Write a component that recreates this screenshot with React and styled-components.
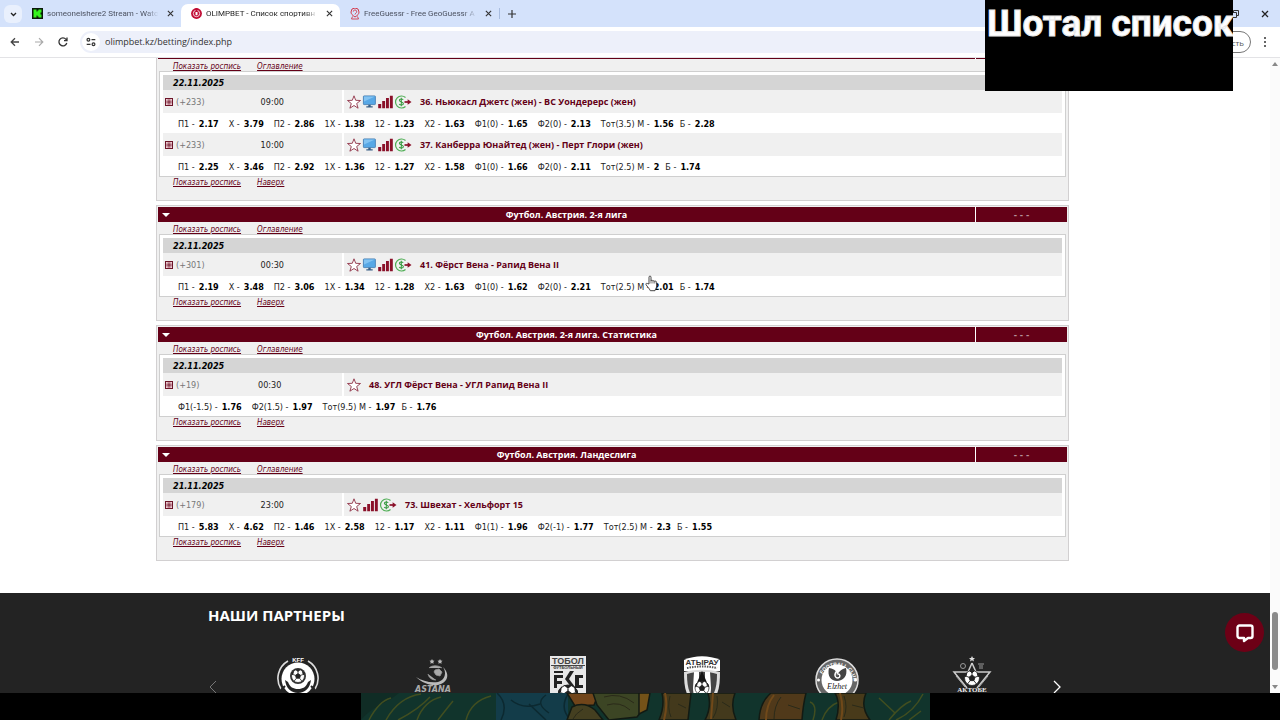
import React from "react";
import styled, { createGlobalStyle } from "styled-components";

const maroon = "#640017";
const siteFont = `"DejaVu Sans Condensed", "DejaVu Sans", sans-serif`;
const titleFont = `"Open Sans", "Noto Sans", sans-serif`;
const chromeFont = `"Open Sans", "Noto Sans", sans-serif`;

const GlobalStyle = createGlobalStyle`
  * { box-sizing: border-box; }
  body { margin: 0; background: #fff; font-family: ${siteFont}; font-size: 9px; color: #222; }
  button { border: 0; padding: 0; margin: 0; background: none; font: inherit; color: inherit; display: flex; align-items: center; justify-content: center; }
  svg { display: block; flex: none; }
  h1, h2, ul { margin: 0; padding: 0; font-size: inherit; }
  ul { list-style: none; }
`;

const Screen = styled.div`
  position: relative;
  display: flex;
  flex-direction: column;
  height: 100vh;
  overflow: hidden;
`;

/* Browser window */
const TabStrip = styled.div`
  display: flex;
  align-items: flex-end;
  height: 27px;
  padding-left: 4px;
  background: #d4e2fb;
  font-family: ${chromeFont};
  flex: none;
`;
const TabSearch = styled.button`
  && {
    width: 18px;
    height: 18px;
    margin: 0 0 4px;
    border-radius: 6px;
    background: #e9f0fd;
  }
`;
const Tab = styled.div`
  display: flex;
  align-items: center;
  gap: 4px;
  width: 159px;
  height: 23px;
  padding: 0 4px 4px 10px;
  border-radius: 7px 7px 0 0;
  background: ${(p) => (p.$active ? "#fff" : "transparent")};
  color: ${(p) => (p.$active ? "#1f1f1f" : "#4b5160")};
`;
const TabTitle = styled.span`
  flex: 1;
  overflow: hidden;
  white-space: nowrap;
  font: 8px/14px Roboto, sans-serif;
  mask-image: linear-gradient(90deg, #000 88%, transparent);
`;
const TabClose = styled.button`
  && { width: 14px; height: 14px; color: #333; }
`;
const TabDivider = styled.span`
  width: 1px;
  height: 11px;
  margin: 0 8px 8px 0;
  background: #a9bde0;
`;
const NewTab = styled.button`
  && { height: 19px; margin-bottom: 4px; color: #333; }
`;
const WindowButtons = styled.div`
  display: flex;
  gap: 22px;
  margin: 0 11px 9px auto;
`;
const Toolbar = styled.div`
  display: flex;
  align-items: center;
  height: 31px;
  padding: 0 10px 0 9px;
  border-bottom: 1px solid #e3e3e6;
  background: #fff;
  font-family: ${chromeFont};
  flex: none;
`;
const NavButtons = styled.div`
  display: flex;
  gap: 12px;
  width: 71px;
`;
const Omnibox = styled.div`
  display: flex;
  align-items: center;
  gap: 5px;
  flex: 1;
  height: 22px;
  padding-left: 2px;
  border-radius: 11px;
  background: #edf0fa;
`;
const SiteInfo = styled.button`
  && { width: 18px; height: 18px; border-radius: 9px; background: #fff; color: #333; }
`;
const Address = styled.input`
  flex: 1;
  border: 0;
  padding: 0;
  background: none;
  color: #333;
  font: 9px/14px ${chromeFont};
  outline: none;
`;
const ProfilePill = styled.button`
  && {
    justify-content: flex-end;
    width: 80px;
    height: 22px;
    margin: 0 9px;
    padding-right: 6px;
    border: 1px solid #777;
    border-radius: 11px;
    color: #555;
    font-size: 8px;
  }
`;

/* Page */
const Viewport = styled.div`
  display: flex;
  flex: 1;
  min-height: 0;
`;
const PageBody = styled.div`
  display: flex;
  flex-direction: column;
  flex: 1;
  overflow: hidden;
`;
const ScrollTrack = styled.div`
  display: flex;
  flex-direction: column;
  align-items: center;
  width: 10px;
  padding: 4px 0;
  background: #fbfbfb;
`;
const ScrollThumb = styled.div`
  width: 6px;
  height: 58px;
  margin: auto 0 15px;
  border-radius: 3px;
  background: #8b8b8b;
`;
const Leagues = styled.main`
  display: flex;
  flex-direction: column;
  gap: 4px;
  margin: -16px 201px 32px 156px;
  flex: none;
`;
const League = styled.section`
  padding: 1px 1px 11px;
  border: 1px solid #d2d0d1;
  background: #f0f0f0;
`;
const LeagueHeader = styled.header`
  display: flex;
  height: 15px;
  background: ${maroon};
  color: #fff;
`;
const Collapse = styled.button`
  && { width: 16px; height: 15px; }
`;
const LeagueTitle = styled.h2`
  flex: 1;
  padding-right: 16px;
  text-align: center;
  font-family: ${titleFont};
  line-height: 15px;
`;
const LeagueExtra = styled.span`
  width: 92px;
  border-left: 1px solid #fff;
  line-height: 16px;
  text-align: center;
  font-weight: bold;
  color: #b8909a;
`;
const Links = styled.nav`
  display: flex;
  gap: 16px;
  height: 12px;
  padding: ${(p) => (p.$top ? "2px" : "0")} 0 0 15px;
  font-size: 8px;
  line-height: 12px;
`;
const Link = styled.a`
  color: ${maroon};
  font-style: italic;
  text-decoration: underline;
`;
const MatchTable = styled.table`
  width: calc(100% - 2px);
  margin: 0 1px;
  padding: 3px 3px 0;
  border: 1px solid #cfcfcf;
  border-spacing: 0;
  background: #fff;
  td { padding: 0; }
`;
const DateCell = styled.th`
  height: 15px;
  padding: 2px 0 0 10px;
  background: #d5d5d5;
  color: #000;
  text-align: left;
  font-style: italic;
  line-height: 13px;
`;
const TimeCell = styled.td`
  width: 181px;
  height: 23px;
  border-right: 2px solid #fff;
  background: #f0f0f0;
`;
const TimeLine = styled.div`
  display: flex;
  align-items: center;
  padding: 0 2px;
`;
const Count = styled.span`
  margin-left: 3px;
  color: #777;
`;
const Time = styled.time`
  flex: 1;
  text-align: center;
`;
const NameCell = styled.td`
  background: #f0f0f0;
`;
const NameLine = styled.div`
  display: flex;
  align-items: center;
  padding-left: 3px;
`;
const MatchName = styled.a`
  margin-left: 7px;
  color: ${maroon};
  font-family: ${titleFont};
  font-weight: bold;
  text-decoration: none;
  white-space: nowrap;
`;
const OddsCell = styled.td`
  height: 20px;
`;
const OddsList = styled.ul`
  display: flex;
  gap: 10px;
  padding: 1px 0 0 15px;
  line-height: 14px;
  white-space: nowrap;
`;
const Odd = styled.li`
  display: flex;
  gap: 4px;
  margin-left: ${(p) => (p.$tight ? "-4px" : "0")};
  b { color: #000; }
`;

/* Partners */
const Footer = styled.footer`
  flex: 1;
  padding: 12px 208px 0 208px;
  background: #232323;
  color: #fff;
`;
const PartnersTitle = styled.h2`
  && { font: bold 15px/20px ${titleFont}; }
`;
const Carousel = styled.div`
  display: flex;
  margin-top: 31px;
`;
const Arrow = styled.button`
  && {
    width: 23px;
    height: 62px;
    justify-content: ${(p) => (p.$next ? "flex-end" : "flex-start")};
    color: ${(p) => (p.$next ? "#fff" : "#777")};
  }
`;
const Partners = styled.ul`
  display: flex;
  flex: 1;
  li { flex: 1; display: flex; justify-content: center; }
`;

/* Stream overlay */
const ChatButton = styled.button`
  && {
    position: absolute;
    right: 16px;
    bottom: 68px;
    width: 39px;
    height: 39px;
    border-radius: 50%;
    background: #6d0016;
    color: #fff;
  }
`;
const Banner = styled.div`
  position: absolute;
  top: 0;
  right: 47px;
  width: 248px;
  height: 91px;
  padding: 3px 0 0 2px;
  overflow: hidden;
  background: #000;
  color: #fff;
  font: bold 37px/42px Roboto, "Liberation Sans", sans-serif;
  -webkit-text-stroke: 1px #e8e8e8;
  white-space: nowrap;
`;
const Pointer = styled.div`
  position: absolute;
  left: 645px;
  top: 275px;
`;
const BottomStrip = styled.div`
  flex: none;
  height: 27px;
  padding: 0 350px 0 361px;
  background: #000;
  svg { width: 100%; }
`;

const Cross = ({ size = 7 }) => (
  <svg width={size} height={size} viewBox="0 0 8 8" stroke="currentColor" strokeWidth="1.3"><path d="M1 1l6 6M7 1L1 7" /></svg>
);
const Kick = () => (
  <svg width="11" height="11" viewBox="0 0 11 11"><rect width="11" height="11" fill="#0b1a08" /><path d="M1.5 1.500h3v2h1v-1h1v-1h3v3h-1v2h1v3h-3v-1h-1v-1h-1v2h-3z" fill="#35f51c" /></svg>
);
const OlimpIcon = () => (
  <svg width="11" height="11" viewBox="0 0 11 11"><circle cx="5.500" cy="5.500" r="5.400" fill="#c00c34" /><circle cx="5.500" cy="5.500" r="3.200" fill="none" stroke="#fff" strokeWidth=".8" /><path d="M5.500 0v6" stroke="#c00c34" strokeWidth="2" /><path d="M4.500 4h2v2.500l-1 1-1-1z" fill="#fff" /></svg>
);
const GuessIcon = () => (
  <svg width="10" height="12" viewBox="0 0 10 12" fill="none" stroke="#d33a4b"><path d="M5 9C2 7 1 5.800 1 4a4 4 0 0 1 8 0c0 1.800-1 3.200-4 5z" /><path d="M3.300 3.600a1.700 1.700 0 1 1 2.400 1.600L5 6.500M2.500 8.500l-1 2.500h7l-1-2.500" strokeWidth=".9" /></svg>
);
const Back = () => (
  <svg width="12" height="12" viewBox="0 0 12 12" fill="none" stroke="#444" strokeWidth="1.300"><path d="M10 6H2.500M6 2.200L2.200 6 6 9.800" /></svg>
);
const Forward = () => (
  <svg width="12" height="12" viewBox="0 0 12 12" fill="none" stroke="#aaa" strokeWidth="1.200"><path d="M2 6h7.500M6 2.200L9.800 6 6 9.800" /></svg>
);
const Reload = () => (
  <svg width="12" height="12" viewBox="0 0 12 12" fill="none" stroke="#333" strokeWidth="1.300"><path d="M9.800 7A4 4 0 1 1 9 3.300L10 4.400M10 1.600v3H7" /></svg>
);
const Tune = () => (
  <svg width="10" height="10" viewBox="0 0 10 10" fill="none" stroke="currentColor" strokeWidth="1.200"><path d="M5.500 2.700H9.300M.7 7.300h3.800" /><circle cx="2.400" cy="2.700" r="1.400" /><circle cx="7.500" cy="7.300" r="1.400" /></svg>
);
const Expand = () => (
  <svg width="8" height="8" viewBox="0 0 8 8"><rect x=".5" y=".5" width="7" height="7" fill="#f3dfe3" stroke="#6d1428" /><path d="M4 1.500v5M1.500 4h5" stroke="#6d1428" /><rect x="2" y="2" width="4" height="4" fill="none" stroke="#a04c5e" strokeWidth=".6" /></svg>
);
const Star = () => (
  <svg width="15" height="14" viewBox="0 0 15 14"><path d="M7 .8l1.700 4.500 4.800.2-3.800 3 1.400 4.700L7 10.500l-4.100 2.700 1.400-4.700L.5 5.500l4.800-.2z" fill="#fff" stroke="#8e3045" strokeWidth=".9" /></svg>
);
const Monitor = () => (
  <svg width="15" height="14" viewBox="0 0 15 14"><rect x="1.400" y=".9" width="12" height="8.700" rx=".7" fill="#58a8e6" stroke="#3f79ae" strokeWidth=".8" /><path d="M2 1.500h11L2 6.500z" fill="#83c3f2" /><path d="M6.300 9.800h2.400v1.500h2v1.300H4.300v-1.300h2z" fill="#395f86" /></svg>
);
const Bars = () => (
  <svg width="17" height="14" viewBox="0 0 17 14" fill="#8a1029"><path d="M1.200 9h3v4.200h-3zM5.200 6h2.900v7.200H5.200zM9 3h2.900v10.200H9zM12.900 .8h2.900v12.400h-2.900z" /></svg>
);
const Cashout = () => (
  <svg width="19" height="14" viewBox="0 0 19 14" fill="none"><path d="M11.500 2.500a6 6 0 1 0 0 9" stroke="#4fae55" strokeWidth="1.200" /><path d="M9.200 4.700C8.500 3.700 5.400 3.600 5.400 5.300c0 1.900 4 1.300 4 3.300 0 1.900-3.200 1.800-4.200.6M7.300 2.800v8.400" stroke="#3d9c45" strokeWidth="1.100" /><path d="M10.500 7h5" stroke="#8a1029" strokeWidth="1.700" /><path d="M13.600 4.200L17.500 7l-3.900 2.800z" fill="#8a1029" /></svg>
);
const icons = { star: Star, monitor: Monitor, bars: Bars, cash: Cashout };

const Ball = ({ x, y, r, dark = "#232323" }) => (
  <g transform={`translate(${x} ${y}) scale(${r / 10})`}>
    <circle r="10" fill="#fff" stroke={dark} />
    <path d="M0-4l4 3-1.500 4.500h-5L-4-1zM0-10v6M4-1l5.500-2M2.500 3.500L6 8M-2.500 3.500L-6 8M-4-1l-5.500-2M-3-9.500L0-7l3-2.500zM7-7l2 2.500.5 3-2-2zM-7-7l-2 2.500-.5 3 2-2z" fill={dark} stroke={dark} strokeWidth="1.200" />
  </g>
);
const badge = { fontFamily: "Liberation Sans, sans-serif", fontWeight: "bold", textAnchor: "middle" };

const Kff = () => (
  <svg width="44" height="48" viewBox="0 0 44 48">
    <path d="M12 5a20 20 0 0 0-7 28M32 5a20 20 0 0 1 7 28" fill="none" stroke="#ddd" strokeWidth="1.600" />
    <circle cx="22" cy="23" r="16.500" fill="#fff" /><circle cx="22" cy="20" r="8" fill="#333" /><Ball x={22} y={20} r={6.500} />
    <path d="M9 24c1 8 6 13 13 13s12-5 13-13l-3 2c-2 5-5 7-10 7s-8-2-10-7z" fill="#232323" />
    <path d="M9 30l-4 4M35 30l4 4" stroke="#232323" strokeWidth="2" />
    <text x="22" y="6" fontSize="6" fill="#fff" {...badge}>KFF</text>
  </svg>
);
const Astana = () => (
  <svg width="46" height="48" viewBox="0 0 46 48" fill="none">
    <path d="M22 3l.8 1.600 1.700.2-1.200 1.200.3 1.800-1.600-.9-1.600.9.3-1.800-1.200-1.200 1.700-.2zM30 3l.8 1.600 1.700.2-1.200 1.200.3 1.800-1.600-.9-1.600.9.3-1.800-1.200-1.200 1.700-.2z" fill="#bbb" />
    <path d="M19 12c3-3 9-3 13 0M25 14l4-1 3 3-2 4-4-1-2-3zM18 18c1 4 4 6 8 6" fill="#aaa" stroke="#999" strokeWidth=".8" />
    <path d="M33 11c4 6 2 13-5 15-8 1-16-1-22-5 6 6 15 9 22 8 9-2 13-10 5-18z" fill="#bbb" />
    <text x="23" y="36" fontSize="8" fill="#aaa" fontStyle="italic" fontWeight="bold" textAnchor="middle" fontFamily="DejaVu Sans">ASTANA</text>
  </svg>
);
const Tobol = () => (
  <svg width="36" height="48" viewBox="0 0 36 48">
    <path d="M0 0h36v46H0z" fill="#e8e8e8" />
    <text x="18" y="8" fontSize="9" fill="#444" {...badge}>ТОБОЛ</text>
    <path d="M1 9.500h34" stroke="#444" /><text x="18" y="13" fontSize="4" fill="#333" {...badge}>ФУТБОЛЬНЫЙ</text>
    <path d="M4 15h9v2H4zM4 19h9v3H7v3h5v3H7v4H4zM20 15h4l-5 8 6 8h-4l-6-8zM25 19h8v3h-4v7h4v3h-8z" fill="#222" />
    <Ball x={18} y={39} r={10} />
  </svg>
);
const Atyrau = () => (
  <svg width="38" height="48" viewBox="0 0 38 48">
    <path d="M1 4C12-1 26-1 37 4v11H1z" fill="#fff" /><text x="19" y="9" fontSize="8" fill="#333" {...badge}>АТЫРАУ</text>
    <path d="M4 12c10-2 20-2 30 0" fill="none" stroke="#555" strokeWidth="2" strokeDasharray="1.500 1" />
    <path d="M1 16c12-3 24-3 36 0 0 13-1 23-9 30H10C2 39 1 29 1 16z" fill="#ddd" />
    <path d="M4 18c10-3 20-3 30 0 0 12-2 20-8 27H12C6 38 4 30 4 18z" fill="#444" />
    <path d="M11 16h5v28h-3c-2-3-3-8-3-12zM22 16h5l1 16c0 4-1 9-3 12h-3z" fill="#fff" />
    <path d="M19 15l6 14H13z" fill="#151515" /><Ball x={19} y={32} r={7} />
  </svg>
);
const Kyzyl = () => (
  <svg width="46" height="48" viewBox="0 0 46 48">
    <circle cx="23" cy="24" r="21" fill="#666" stroke="#ddd" strokeWidth="1.500" /><circle cx="23" cy="24" r="15.500" fill="#fff" />
    <defs><path id="clubArc" d="M6 27a17 17 0 1 1 34 0" /></defs>
    <text fontSize="5" fill="#fff" fontWeight="bold" fontFamily="Liberation Sans"><textPath href="#clubArc" startOffset="9">FOOTBALL CLUB</textPath></text>
    <path d="M15 12c7 1 8 4 8 9 0-4 4-8 9-9 2 8-3 13-9 13s-10-5-8-13z" fill="#444" /><path d="M24 14c-5 4-3 8 0 8 3-1 2-4 0-4" stroke="#fff" strokeWidth="1.500" fill="none" />
    <text x="23" y="33" fontSize="8" fontStyle="italic" fill="#222" textAnchor="middle" fontFamily="Liberation Serif">Elzhet</text>
    <circle cx="4.500" cy="24" r="1.500" fill="#fff" /><circle cx="41.500" cy="24" r="1.500" fill="#fff" />
  </svg>
);
const Aktobe = () => (
  <svg width="40" height="48" viewBox="0 0 40 48" fill="none">
    <path d="M20 0l1 2h2l-1.600 1.400.6 2.100-2-1.200-2 1.200.6-2.100L17 2h2z" fill="#ddd" />
    <path d="M20 7l4 9h14L25 32M20 7l-4 9H2l13 16" stroke="#ccc" strokeWidth="1.500" /><path d="M4 20l9 11M36 20l-9 11" stroke="#aaa" />
    <circle cx="11" cy="10" r="2.500" stroke="#999" /><path d="M26 8h6M27 10h4M27 12h4" stroke="#999" />
    <Ball x={20} y={22} r={7.500} />
    <text x="20" y="36" fontSize="7" fill="#eee" fontWeight="bold" textAnchor="middle" fontFamily="Liberation Serif">АКТОБЕ</text>
    <path d="M14 38h12l-6 4z" fill="#ddd" />
  </svg>
);
const Swamp = () => (
  <svg height="27" viewBox="0 0 569 27" preserveAspectRatio="xMidYMid slice">
    <rect width="569" height="27" fill="#11342c" />
    <path d="M135 0h72v27h-72z" fill="#133c49" />
    <path d="M0 27C10 14 28 9 38 0H0z" fill="#102c25" />
    <g fill="none" stroke="#414e20" strokeWidth="1.500"><path d="M8 27Q18 8 30 5M25 27Q38 4 60 1M37 27Q58 16 69 4M56 27Q63 8 80 4M77 27Q87 14 92 8M105 27Q110 8 130 3" /><path d="M452 27Q457 12 449 9M461 27Q466 13 478 9M518 5l16 15M528 27Q540 12 550 8M535 27Q553 19 562 1M548 27l12-9" /></g>
    <path d="M136 0q12 11 4 27M150 7q12 10 29 4m-11 0 17 16M185 2q-12 8 3 18M207 1q-9 15 3 26" fill="none" stroke="#0c2930" strokeWidth="1.500" />
    <g stroke="#121a13" strokeWidth="1.500">
      <path d="M206 0h32l-5 12-19 1z" fill="#71451a" />
      <path d="M211 14q12-6 23 3l8 10h-36z" fill="#443f20" />
      <path d="M232 0h48q6 13-4 24l-28 3-12-15z" fill="#3c4524" />
      <path d="M278 0h11l-3 17-8 4z" fill="#745218" />
      <path d="M301 0h29l-3 27h-29q6-14 3-27zM347 0h27q-5 13 1 27h-31q7-13 3-27z" fill="#43391c" />
      <path d="M410 0h35q-3 12-4 27h-43q1-18 12-27z" fill="#50391a" />
      <path d="M474 0h31q-6 14 4 27h-34q5-17-1-27z" fill="#483a1a" />
    </g>
    <g fill="none" stroke="#2a2a19"><path d="M222 16q-8 5-10 10M243 4q16-5 30 6M246 12q13-4 23 5M309 3q-3 12 1 21M317 11l8 4M356 3q2 12-4 22M361 9l8 5M420 4q-7 9-7 22M427 12l12 4M483 3q4 11 0 21M491 12l12 3" /></g>
    <g fill="none" stroke="#70491a" strokeWidth="2"><path d="M304 0q3 12-1 27M352 0l-2 26M413 2q-8 10-8 25M479 0q4 14 1 27" /></g>
  </svg>
);

const all = ["star", "monitor", "bars", "cash"];
const odds = (s) => s.split(";").map((o) => o.split("="));
const leagues = [
  {
    title: "Футбол. Австралия. Женщины", date: "22.11.2025",
    matches: [
      { n: 233, time: "09:00", icons: all, name: "36. Ньюкасл Джетс (жен) - ВС Уондерерс (жен)", odds: odds("П1=2.17;X=3.79;П2=2.86;1X=1.38;12=1.23;X2=1.63;Ф1(0)=1.65;Ф2(0)=2.13;Тот(3.5) М=1.56;Б=2.28") },
      { n: 233, time: "10:00", icons: all, name: "37. Канберра Юнайтед (жен) - Перт Глори (жен)", odds: odds("П1=2.25;X=3.46;П2=2.92;1X=1.36;12=1.27;X2=1.58;Ф1(0)=1.66;Ф2(0)=2.11;Тот(2.5) М=2;Б=1.74") },
    ],
  },
  {
    title: "Футбол. Австрия. 2-я лига", date: "22.11.2025",
    matches: [{ n: 301, time: "00:30", icons: all, name: "41. Фёрст Вена - Рапид Вена II", odds: odds("П1=2.19;X=3.48;П2=3.06;1X=1.34;12=1.28;X2=1.63;Ф1(0)=1.62;Ф2(0)=2.21;Тот(2.5) М=2.01;Б=1.74") }],
  },
  {
    title: "Футбол. Австрия. 2-я лига. Статистика", date: "22.11.2025",
    matches: [{ n: 19, time: "00:30", icons: ["star"], name: "48. УГЛ Фёрст Вена - УГЛ Рапид Вена II", odds: odds("Ф1(-1.5)=1.76;Ф2(1.5)=1.97;Тот(9.5) М=1.97;Б=1.76") }],
  },
  {
    title: "Футбол. Австрия. Ландеслига", date: "21.11.2025",
    matches: [{ n: 179, time: "23:00", icons: ["star", "bars", "cash"], name: "73. Швехат - Хельфорт 15", odds: odds("П1=5.83;X=4.62;П2=1.46;1X=2.58;12=1.17;X2=1.11;Ф1(1)=1.96;Ф2(-1)=1.77;Тот(2.5) М=2.3;Б=1.55") }],
  },
];

const LeagueBlock = ({ league }) => (
  <League>
    <LeagueHeader>
      <Collapse aria-label="Свернуть"><svg width="8" height="4" viewBox="0 0 8 4"><path d="M0 0h8L4 4z" fill="#fff" /></svg></Collapse>
      <LeagueTitle>{league.title}</LeagueTitle>
      <LeagueExtra>- - -</LeagueExtra>
    </LeagueHeader>
    <Links $top><Link href="#list">Показать роспись</Link><Link href="#contents">Оглавление</Link></Links>
    <MatchTable>
      <tbody>
        <tr><DateCell colSpan={2}>{league.date}</DateCell></tr>
        {league.matches.map((m) => (
          <React.Fragment key={m.name}>
            <tr>
              <TimeCell><TimeLine><Expand /><Count>(+{m.n})</Count><Time>{m.time}</Time></TimeLine></TimeCell>
              <NameCell><NameLine>{m.icons.map((k) => { const Icon = icons[k]; return <Icon key={k} />; })}<MatchName href="#match">{m.name}</MatchName></NameLine></NameCell>
            </tr>
            <tr>
              <OddsCell colSpan={2}>
                <OddsList>{m.odds.map(([k, v]) => <Odd key={k} $tight={k === "Б"}><span>{k} -</span><b>{v}</b></Odd>)}</OddsList>
              </OddsCell>
            </tr>
          </React.Fragment>
        ))}
      </tbody>
    </MatchTable>
    <Links><Link href="#list">Показать роспись</Link><Link href="#top">Наверх</Link></Links>
  </League>
);

const tabs = [
  { icon: Kick, title: "someoneishere2 Stream - Watc" },
  { icon: OlimpIcon, title: "OLIMPBET - Список спортивн", active: true },
  { icon: GuessIcon, title: "FreeGuessr - Free GeoGuessr A" },
];

export default function App() {
  return (
    <Screen>
      <GlobalStyle />
      <TabStrip>
        <TabSearch aria-label="Поиск вкладок"><svg width="7" height="5" viewBox="0 0 7 5" fill="none" stroke="#222" strokeWidth="1.300"><path d="M1 1l2.500 2.500L6 1" /></svg></TabSearch>
        {tabs.map(({ icon: Icon, title, active }) => (
          <Tab key={title} $active={active}><Icon /><TabTitle>{title}</TabTitle><TabClose aria-label="Закрыть"><Cross /></TabClose></Tab>
        ))}
        <TabDivider />
        <NewTab aria-label="Новая вкладка"><svg width="8" height="8" viewBox="0 0 8 8" stroke="currentColor" strokeWidth="1.200"><path d="M4 0v8M0 4h8" /></svg></NewTab>
        <WindowButtons>
          <button aria-label="Развернуть"><svg width="8" height="8" viewBox="0 0 8 8" fill="none" stroke="#333"><path d="M.5 2.500h5v5h-5zM2.500 2V.5h5v5H6" /></svg></button>
          <button aria-label="Закрыть окно"><Cross size={8} /></button>
        </WindowButtons>
      </TabStrip>
      <Toolbar>
        <NavButtons>
          <button aria-label="Назад"><Back /></button>
          <button aria-label="Вперёд"><Forward /></button>
          <button aria-label="Обновить"><Reload /></button>
        </NavButtons>
        <Omnibox>
          <SiteInfo aria-label="Сведения о сайте"><Tune /></SiteInfo>
          <Address aria-label="Адрес" defaultValue="olimpbet.kz/betting/index.php" />
        </Omnibox>
        <ProfilePill>сть</ProfilePill>
        <button aria-label="Меню"><svg width="10" height="10" viewBox="0 0 10 10" fill="#333"><circle cx="5" cy="1" r="1" /><circle cx="5" cy="5" r="1" /><circle cx="5" cy="9" r="1" /></svg></button>
      </Toolbar>
      <Viewport>
        <PageBody>
          <Leagues>{leagues.map((l) => <LeagueBlock key={l.title} league={l} />)}</Leagues>
          <Footer>
            <PartnersTitle>НАШИ ПАРТНЕРЫ</PartnersTitle>
            <Carousel>
              <Arrow aria-label="Предыдущий"><svg width="9" height="14" viewBox="0 0 9 14" fill="none" stroke="currentColor"><path d="M8 1L2 7l6 6" /></svg></Arrow>
              <Partners><li><Kff /></li><li><Astana /></li><li><Tobol /></li><li><Atyrau /></li><li><Kyzyl /></li><li><Aktobe /></li></Partners>
              <Arrow $next aria-label="Следующий"><svg width="9" height="14" viewBox="0 0 9 14" fill="none" stroke="currentColor" strokeWidth="1.300"><path d="M1 1l6 6-6 6" /></svg></Arrow>
            </Carousel>
          </Footer>
        </PageBody>
        <ScrollTrack>
          <svg width="6" height="4" viewBox="0 0 6 4"><path d="M3 0l3 4H0z" fill="#888" /></svg>
          <ScrollThumb />
          <svg width="6" height="4" viewBox="0 0 6 4"><path d="M3 4l3-4H0z" fill="#888" /></svg>
        </ScrollTrack>
      </Viewport>
      <BottomStrip><Swamp /></BottomStrip>
      <ChatButton aria-label="Чат"><svg width="20" height="20" viewBox="0 0 20 20" fill="none" stroke="currentColor" strokeWidth="2.400"><path d="M4.500 2.500h11a2 2 0 0 1 2 2V13a2 2 0 0 1-2 2H13l-4 3v-3H4.500a2 2 0 0 1-2-2V4.500a2 2 0 0 1 2-2z" strokeLinejoin="round" /></svg></ChatButton>
      <Banner>Шотал список</Banner>
      <Pointer><svg width="13" height="17" viewBox="0 0 13 17"><path d="M4 9V2.200C4 .6 6 .6 6 2.200V6c0-1 2-1 2 .3 0-.9 1.800-.9 1.800.4 0-.9 1.800-.7 1.800.6V11c0 2-1.300 3-1.600 4.700H5.300C4.500 13.500 2 11.500 1 9.600.5 8.300 2 7.900 2.700 8.600z" fill="#fff" stroke="#333" strokeWidth=".9" /><path d="M6 6v2.500M8 6.500v2M9.800 7v1.500" stroke="#333" strokeWidth=".7" /></svg></Pointer>
    </Screen>
  );
}
